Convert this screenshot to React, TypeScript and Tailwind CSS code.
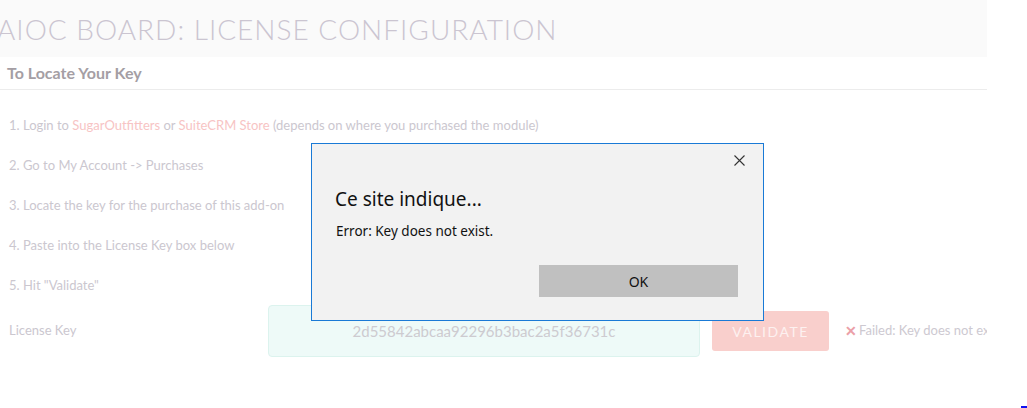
import React from "react";

export default function App() {
  const lato = { fontFamily: "Lato, 'Open Sans', sans-serif" };
  return (
    <div className="relative w-[1027px] h-[408px] bg-white overflow-hidden" style={lato}>
      <div className="w-[987px]">
        <div className="h-[57px] bg-[#fafafa] flex items-center overflow-hidden">
          <div className="ml-[-3px] text-[28px] font-light tracking-[1px] text-[#cbc5d1] leading-none whitespace-nowrap">
            AIOC BOARD: LICENSE CONFIGURATION
          </div>
        </div>
        <div className="h-[33px] border-b border-[#ececec] flex items-center pl-[7px] text-[16px] font-bold text-[#a49ea4]">
          To Locate Your Key
        </div>
        <div className="pl-[9px] text-[13px] text-[#cbc7cf] pt-[16px]">
          <div className="h-[40px] flex items-center">
            <span>
              1. Login to <span className="text-[#f7c4c4]">SugarOutfitters</span> or{" "}
              <span className="text-[#f7c4c4]">SuiteCRM Store</span> (depends on where you purchased the module)
            </span>
          </div>
          <div className="h-[40px] flex items-center">2. Go to My Account -&gt; Purchases</div>
          <div className="h-[40px] flex items-center">3. Locate the key for the purchase of this add-on</div>
          <div className="h-[40px] flex items-center">4. Paste into the License Key box below</div>
          <div className="h-[40px] flex items-center">5. Hit "Validate"</div>
        </div>
        <div className="flex items-center mt-[-1px] h-[52px] whitespace-nowrap">
          <div className="pl-[9px] w-[268px] text-[13px] text-[#cbc7cf]">License Key</div>
          <div className="w-[432px] h-[52px] bg-[#eefaf8] border border-[#dcf3ee] rounded-[4px] flex items-center justify-center text-[15px] text-[#cdcbd0]">
            2d55842abcaa92296b3bac2a5f36731c
          </div>
          <div className="ml-[12px] w-[117px] h-[40px] bg-[#f9cfcc] rounded-[3px] flex items-center justify-center text-[14px] text-[#fdf1f0] tracking-[1.5px]">
            VALIDATE
          </div>
          <div className="ml-[16px] flex items-center text-[13px] text-[#cdc9d1] overflow-hidden w-[142px]">
            <span className="text-[#eba0a8] text-[14px] font-bold mr-[2px] leading-none">✕</span>
            <span>Failed: Key does not exist.</span>
          </div>
        </div>
      </div>

      <div
        className="absolute left-[311px] top-[143px] w-[453px] h-[178px] bg-[#f2f2f2] border border-[#1a7ad6]"
        style={{ fontFamily: "'Noto Sans', 'Open Sans', sans-serif" }}
      >
        <svg className="absolute left-[422px] top-[11px]" width="11" height="11" viewBox="0 0 11 11">
          <path d="M0.5 0.5 L10.5 10.5 M10.5 0.5 L0.5 10.5" stroke="#333" strokeWidth="1.1" />
        </svg>
        <div className="absolute left-[23px] top-[46px] text-[19px] text-[#111] leading-none">Ce site indique...</div>
        <div className="absolute left-[24px] top-[81px] text-[13.5px] text-[#111] leading-none">Error: Key does not exist.</div>
        <div className="absolute left-[227px] top-[121px] w-[199px] h-[32px] bg-[#c0c0c0] flex items-center justify-center text-[14px] text-[#111]">
          OK
        </div>
      </div>
      <div className="absolute left-[1021px] top-[406px] w-[6px] h-[2px] bg-[#1010f0]" />
    </div>
  );
}
